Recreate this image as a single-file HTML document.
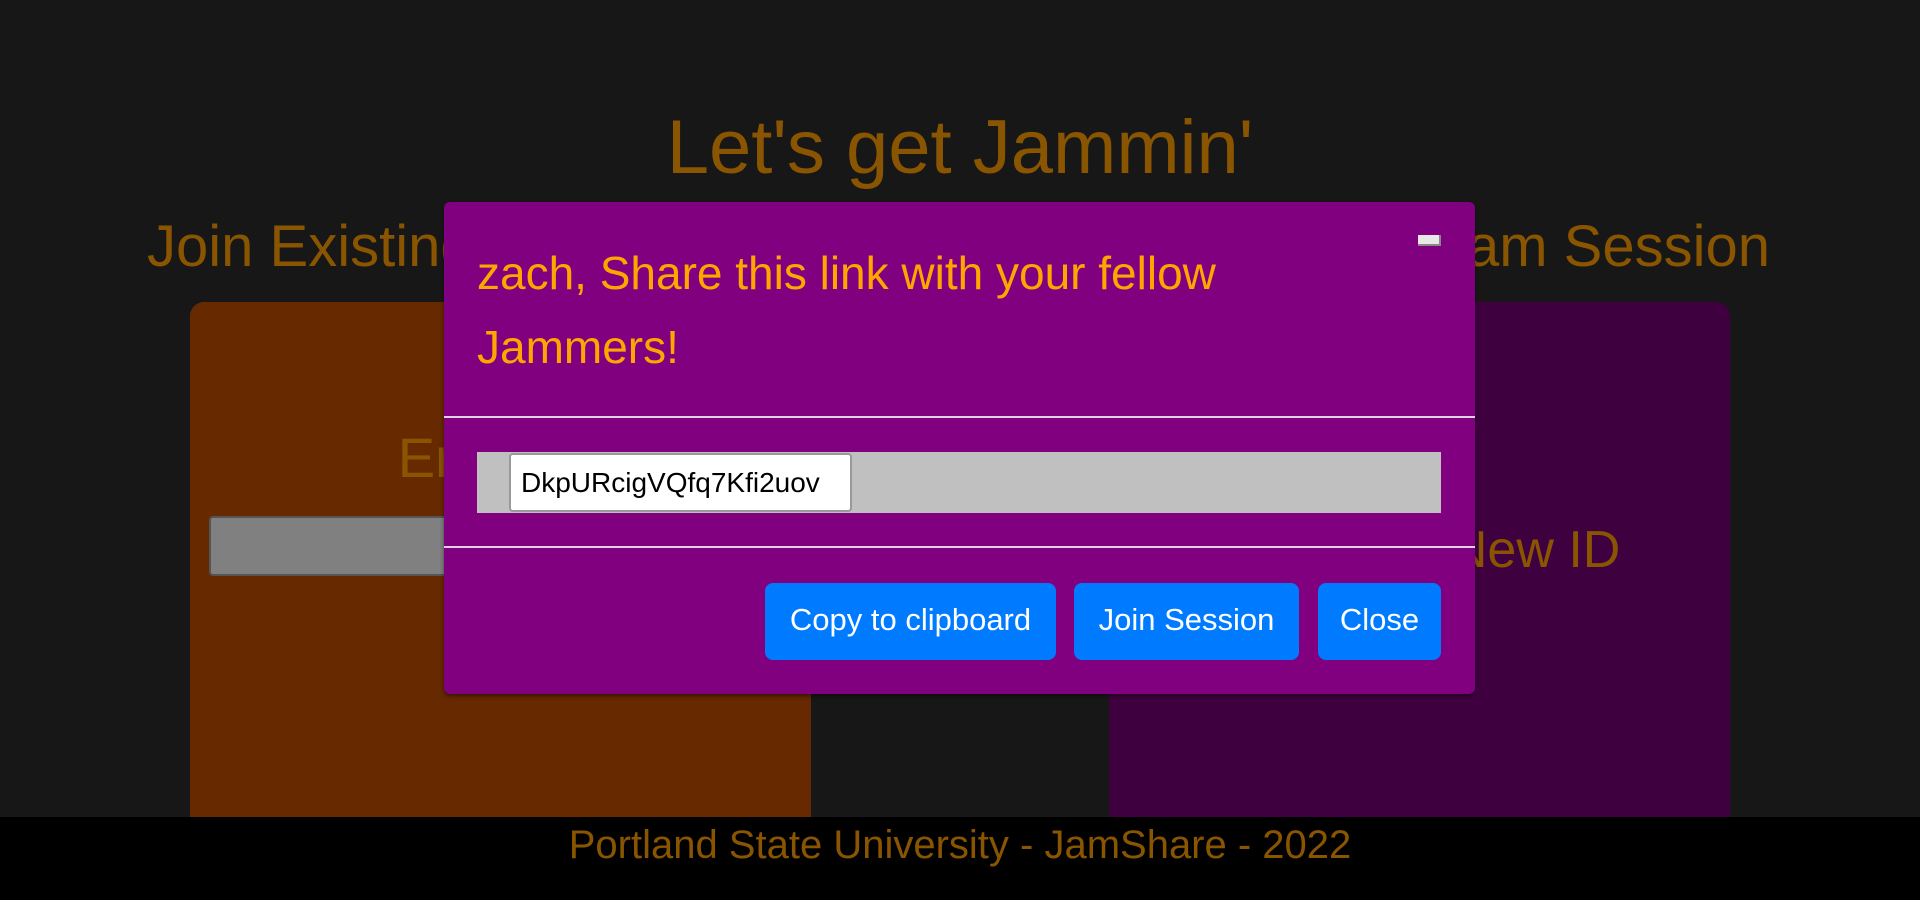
<!DOCTYPE html>
<html><head><style>
html,body{margin:0;padding:0;width:1920px;height:900px;overflow:hidden;background:#171717;font-family:"Liberation Sans Narrow","Liberation Sans",sans-serif;}
.a{position:absolute;}
.t{color:#8a5500;white-space:nowrap;}
</style></head><body>
<div class="a t" style="left:0;width:1920px;top:98px;text-align:center;font-size:76px;line-height:100px;">Let's get Jammin'</div>
<div class="a t" style="left:147px;top:212px;font-size:58px;line-height:70px;">Join Existing Jam Session</div>
<div class="a t" style="right:150px;top:212px;font-size:58px;line-height:70px;">Create New Jam Session</div>
<div class="a" style="left:190px;top:302px;width:621px;height:530px;background:#672900;border-radius:14px;"></div>
<div class="a" style="left:1109px;top:302px;width:621px;height:530px;background:#3f003f;border-radius:14px;"></div>
<div class="a t" style="left:190px;width:621px;top:428px;text-align:center;font-size:56px;line-height:60px;">Enter ID</div>
<div class="a" style="left:209px;top:516px;width:580px;height:60px;background:#808080;border:2px solid #555;border-radius:4px;box-sizing:border-box;"></div>
<div class="a t" style="left:1109px;width:621px;top:520px;text-align:center;font-size:52px;line-height:60px;">Generate New ID</div>
<div class="a" style="left:0;top:817px;width:1920px;height:83px;background:#000;"></div>
<div class="a t" style="left:0;width:1920px;top:822px;text-align:center;font-size:40px;line-height:46px;">Portland State University - JamShare - 2022</div>

<div class="a" style="left:444px;top:202px;width:1031px;height:492px;background:#800080;border-radius:6px;box-shadow:0 2px 4px rgba(0,0,0,.5);"></div>
<div class="a" style="left:1418px;top:235px;width:23px;height:11px;background:#e8e8e8;border-right:2px solid #888;border-bottom:2px solid #888;box-sizing:border-box;"></div>
<div class="a" style="left:477px;top:236px;width:900px;color:#ffa500;font-size:46px;line-height:74px;">zach, Share this link with your fellow<br>Jammers!</div>
<div class="a" style="left:444px;top:416px;width:1031px;height:2px;background:#e0d0e0;"></div>
<div class="a" style="left:477px;top:452px;width:964px;height:61px;background:#c0c0c0;"></div>
<div class="a" style="left:509px;top:453px;width:343px;height:59px;background:#fff;border:2px solid #999;border-radius:4px;box-sizing:border-box;font-size:28px;line-height:55px;padding-left:10px;color:#000;">DkpURcigVQfq7Kfi2uov</div>
<div class="a" style="left:444px;top:546px;width:1031px;height:2px;background:#e0d0e0;"></div>
<div class="a" style="left:765px;top:583px;width:291px;height:77px;background:#007bff;border-radius:8px;color:#fff;font-size:31px;line-height:74px;text-align:center;">Copy to clipboard</div>
<div class="a" style="left:1074px;top:583px;width:225px;height:77px;background:#007bff;border-radius:8px;color:#fff;font-size:31px;line-height:74px;text-align:center;">Join Session</div>
<div class="a" style="left:1318px;top:583px;width:123px;height:77px;background:#007bff;border-radius:8px;color:#fff;font-size:31px;line-height:74px;text-align:center;">Close</div>
</body></html>
